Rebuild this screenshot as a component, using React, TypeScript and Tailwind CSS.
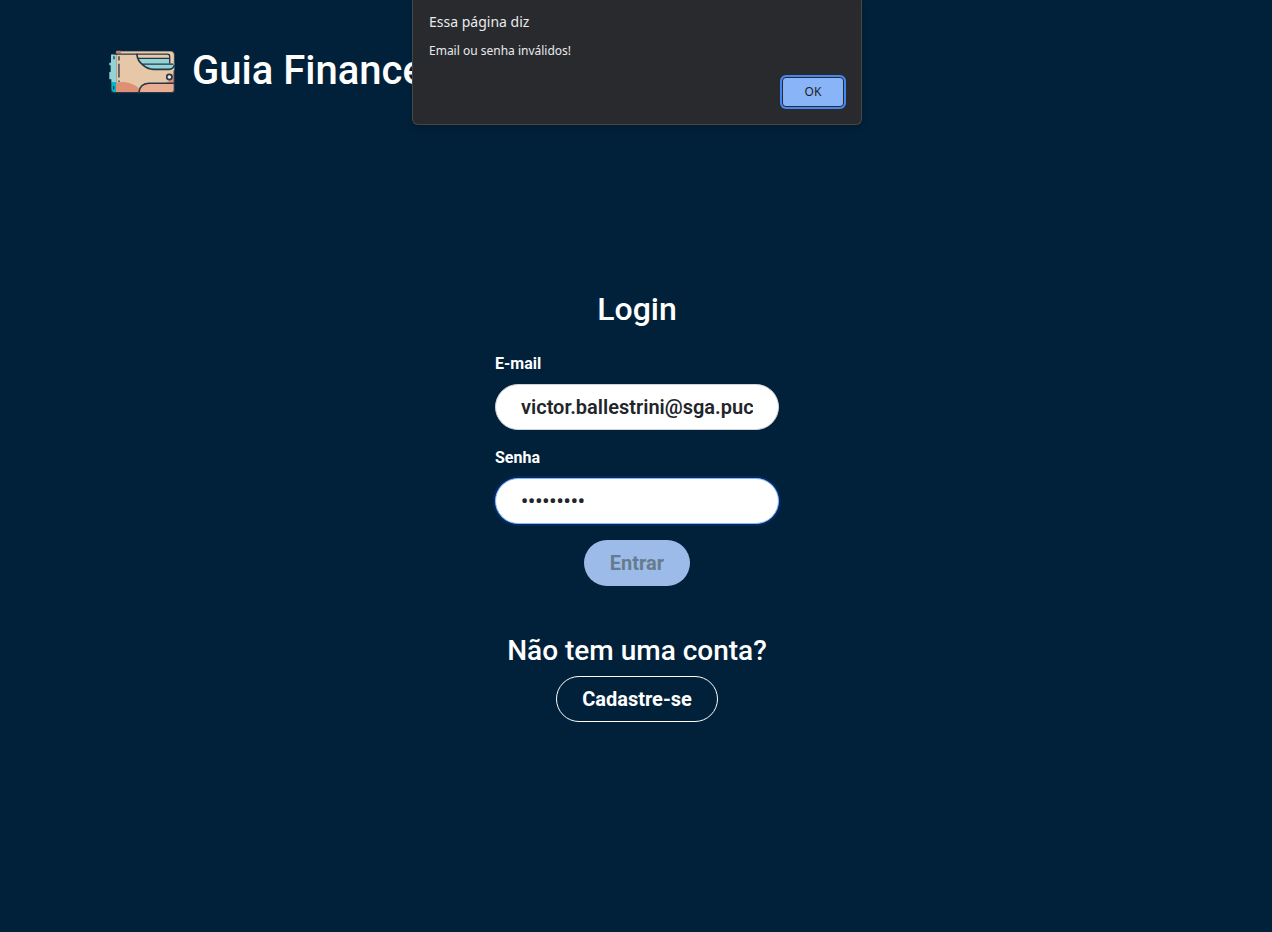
import { useState, type FormEvent } from "react";

function WalletLogo() {
  return (
    <svg viewBox="26 26 202 132" className="h-11 w-[67px] shrink-0" aria-hidden="true">
      <path d="M50 29H214Q223 31 223 40V68H209V38H50Z" fill="#eccbaa" />
      <path d="M48 28H62V36H46Z" fill="#c98574" />
      <path d="M36 38H48V124H33V114H27V92H31V72H27V64H32V43Q32 38 36 38Z" fill="#92d3d5" />
      <path d="M33 122H48V154H38Q33 153 33 147Z" fill="#06b4ca" />
      <path d="M48 38H200Q210 38 210 46V66H223V146Q223 154 215 154H48Z" fill="#e6c8a8" />
      <path d="M48 125Q66 119 87 125Q108 131 118 144L115 154H48Z" fill="#df8f73" />
      <path d="M222 85V126H193Q212 118 217 103Z" fill="#dc9276" />
      <path d="M116 154Q119 127 146 126H223V146Q223 154 215 154Z" fill="#e9ac90" />
      <path d="M114 51H209V66H223V74Q222 84 211 84H160Q142 84 131 75Q118 66 114 51Z" fill="#92d3d5" />
      <g fill="none" stroke="#24374a" strokeWidth="5" strokeLinecap="round">
        <path d="M62 29H213Q223 31 223 40V65" strokeWidth="2" />
        <path d="M38 38H202Q209 38 209 45V65" strokeWidth="4" />
        <path d="M110 39Q112 58 127 70Q142 84 160 84H207Q220 83 223 72" />
        <path d="M115 51H208M128 68H219" strokeWidth="4" />
        <path d="M223 89V146Q223 154 215 154H40Q33 154 33 147" strokeWidth="4" />
        <path d="M116 154Q119 127 146 126H222" />
        <path d="M41 46V52M40 136V143" strokeWidth="4" />
        <path d="M56 46V56M56 68V107M56 119V121" strokeWidth="4" />
      </g>
      <circle cx="208" cy="107" r="8" fill="#f5e6d8" stroke="#24374a" strokeWidth="5" />
    </svg>
  );
}

const fieldClass =
  "h-[46px] w-full rounded-full border bg-white px-[25px] text-xl font-semibold text-[#212529] outline-none";

export default function App() {
  const [email, setEmail] = useState("victor.ballestrini@sga.pucminas.br");
  const [password, setPassword] = useState("senha1234");
  const [alertOpen, setAlertOpen] = useState(true);

  function handleSubmit(event: FormEvent) {
    event.preventDefault();
    setAlertOpen(true);
  }

  return (
    <div className="relative min-h-screen bg-[#002139] pl-0.5 font-['Roboto',sans-serif] text-white">
      <header className="flex items-end gap-4 px-[107px] pt-12">
        <WalletLogo />
        <h1 className="text-[40px] leading-[46px] font-medium">Guia Financeiro</h1>
      </header>

      <main className="mx-auto flex w-[284px] flex-col items-center pt-[196px]">
        <h2 className="text-[32px] leading-[38px] font-medium">Login</h2>

        <form onSubmit={handleSubmit} className="mt-6 flex w-full flex-col items-center gap-4">
          <div className="w-full">
            <label htmlFor="email" className="mb-2 block text-base leading-6 font-bold">
              E-mail
            </label>
            <input
              id="email"
              type="text"
              value={email}
              onChange={(event) => setEmail(event.target.value)}
              className={`${fieldClass} border-[#ced4da]`}
            />
          </div>
          <div className="w-full">
            <label htmlFor="password" className="mb-2 block text-base leading-6 font-bold">
              Senha
            </label>
            <input
              id="password"
              type="password"
              value={password}
              onChange={(event) => setPassword(event.target.value)}
              className={`${fieldClass} border-[#86b7fe] shadow-[0_0_0_2px_#022a5c]`}
            />
          </div>
          <button
            type="submit"
            disabled={alertOpen}
            className="h-[46px] rounded-full bg-[#9cbbe9] px-[26px] text-xl font-bold text-[#667c8c]"
          >
            Entrar
          </button>
        </form>

        <h3 className="mt-12 text-[28px] leading-[34px] font-medium whitespace-nowrap">
          Não tem uma conta?
        </h3>
        <a
          href="#cadastro"
          className="mt-2 flex h-[46px] items-center rounded-full border border-white px-[25px] text-xl font-bold"
        >
          Cadastre-se
        </a>
      </main>

      {alertOpen && (
        <div className="absolute inset-x-0 top-0 flex justify-center pl-0.5">
          <div
            role="alertdialog"
            aria-labelledby="alert-title"
            aria-describedby="alert-message"
            className="flex w-[450px] flex-col rounded-b-md border border-t-0 border-[#454746] bg-[#292a2d] px-4 pt-3 pb-[17px] font-['Noto_Sans',sans-serif] text-[#e8eaed] shadow-md"
          >
            <h2 id="alert-title" className="text-sm leading-5">
              Essa página diz
            </h2>
            <p id="alert-message" className="mt-2 text-xs leading-[22px]">
              Email ou senha inválidos!
            </p>
            <button
              type="button"
              onClick={() => setAlertOpen(false)}
              className="mt-[15px] mr-px h-[30px] w-[62px] self-end rounded-sm border border-[#292a2d] bg-[#8ab4f8] text-xs text-[#202124] ring-2 ring-[#4285f4]"
            >
              OK
            </button>
          </div>
        </div>
      )}
    </div>
  );
}
